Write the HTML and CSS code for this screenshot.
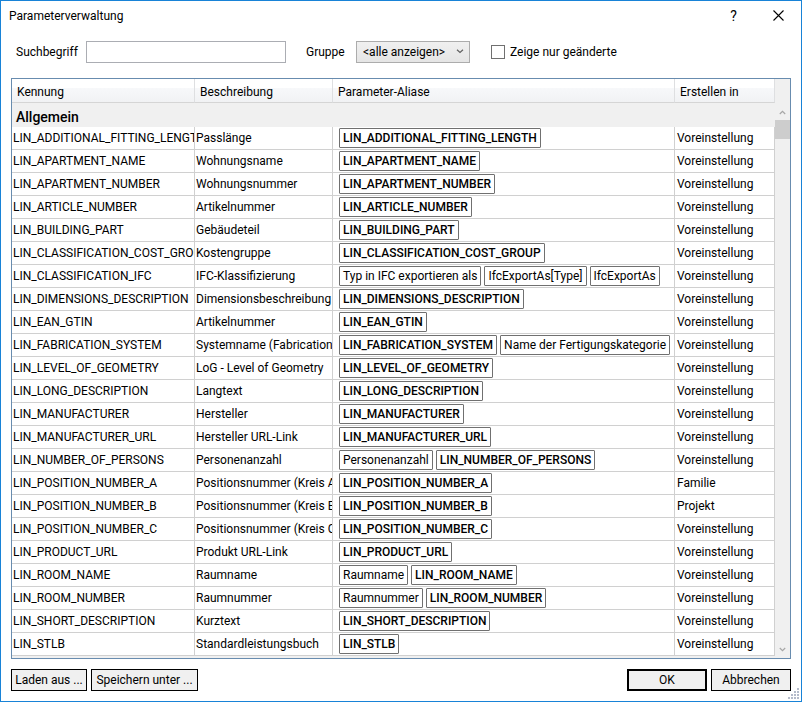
FILE: index.html
```
<!DOCTYPE html>
<html lang="de">
<head>
<meta charset="utf-8">
<title>Parameterverwaltung</title>
<link rel="stylesheet" href="styles.css">
</head>
<body>
<main class="window">
  <header class="titlebar">
    <h1 class="title">Parameterverwaltung</h1>
    <button class="caption-button help" type="button">?</button>
    <button class="caption-button" type="button" aria-label="Schließen"><svg width="11" height="11" viewBox="0 0 11 11"><path d="M.5 .5l10 10M10.5 .5l-10 10" stroke="#000" stroke-width="1.1" fill="none"/></svg></button>
  </header>

  <form class="filters">
    <label for="search">Suchbegriff</label>
    <input class="search" id="search" type="text">
    <label class="group-label" for="group">Gruppe</label>
    <span class="dropdown">
      <select id="group"><option>&lt;alle anzeigen&gt;</option></select>
      <svg class="chevron" width="8" height="5" viewBox="0 0 8 5"><path d="M1 .8l3 2.7 3-2.7" stroke="#606060" stroke-width="1.2" fill="none"/></svg>
    </span>
    <input class="check" id="changed" type="checkbox">
    <label class="check-label" for="changed">Zeige nur geänderte</label>
  </form>

  <section class="list">
    <table class="parameters">
      <colgroup><col class="col-id"><col class="col-text"><col><col class="col-created"></colgroup>
      <thead>
        <tr><th>Kennung</th><th>Beschreibung</th><th>Parameter-Aliase</th><th>Erstellen in</th></tr>
      </thead>
      <tbody>
        <tr class="group"><th colspan="4">Allgemein</th></tr>
        <tr><td>LIN_ADDITIONAL_FITTING_LENGTH</td><td>Passlänge</td><td><b>LIN_ADDITIONAL_FITTING_LENGTH</b></td><td>Voreinstellung</td></tr>
        <tr><td>LIN_APARTMENT_NAME</td><td>Wohnungsname</td><td><b>LIN_APARTMENT_NAME</b></td><td>Voreinstellung</td></tr>
        <tr><td>LIN_APARTMENT_NUMBER</td><td>Wohnungsnummer</td><td><b>LIN_APARTMENT_NUMBER</b></td><td>Voreinstellung</td></tr>
        <tr><td>LIN_ARTICLE_NUMBER</td><td>Artikelnummer</td><td><b>LIN_ARTICLE_NUMBER</b></td><td>Voreinstellung</td></tr>
        <tr><td>LIN_BUILDING_PART</td><td>Gebäudeteil</td><td><b>LIN_BUILDING_PART</b></td><td>Voreinstellung</td></tr>
        <tr><td>LIN_CLASSIFICATION_COST_GROUP</td><td>Kostengruppe</td><td><b>LIN_CLASSIFICATION_COST_GROUP</b></td><td>Voreinstellung</td></tr>
        <tr><td>LIN_CLASSIFICATION_IFC</td><td>IFC-Klassifizierung</td><td><span>Typ in IFC exportieren als</span><span>IfcExportAs[Type]</span><span>IfcExportAs</span></td><td>Voreinstellung</td></tr>
        <tr><td>LIN_DIMENSIONS_DESCRIPTION</td><td>Dimensionsbeschreibung</td><td><b>LIN_DIMENSIONS_DESCRIPTION</b></td><td>Voreinstellung</td></tr>
        <tr><td>LIN_EAN_GTIN</td><td>Artikelnummer</td><td><b>LIN_EAN_GTIN</b></td><td>Voreinstellung</td></tr>
        <tr><td>LIN_FABRICATION_SYSTEM</td><td>Systemname (Fabrication)</td><td><b>LIN_FABRICATION_SYSTEM</b><span>Name der Fertigungskategorie</span></td><td>Voreinstellung</td></tr>
        <tr><td>LIN_LEVEL_OF_GEOMETRY</td><td>LoG - Level of Geometry</td><td><b>LIN_LEVEL_OF_GEOMETRY</b></td><td>Voreinstellung</td></tr>
        <tr><td>LIN_LONG_DESCRIPTION</td><td>Langtext</td><td><b>LIN_LONG_DESCRIPTION</b></td><td>Voreinstellung</td></tr>
        <tr><td>LIN_MANUFACTURER</td><td>Hersteller</td><td><b>LIN_MANUFACTURER</b></td><td>Voreinstellung</td></tr>
        <tr><td>LIN_MANUFACTURER_URL</td><td>Hersteller URL-Link</td><td><b>LIN_MANUFACTURER_URL</b></td><td>Voreinstellung</td></tr>
        <tr><td>LIN_NUMBER_OF_PERSONS</td><td>Personenanzahl</td><td><span>Personenanzahl</span><b>LIN_NUMBER_OF_PERSONS</b></td><td>Voreinstellung</td></tr>
        <tr><td>LIN_POSITION_NUMBER_A</td><td>Positionsnummer (Kreis A)</td><td><b>LIN_POSITION_NUMBER_A</b></td><td>Familie</td></tr>
        <tr><td>LIN_POSITION_NUMBER_B</td><td>Positionsnummer (Kreis B)</td><td><b>LIN_POSITION_NUMBER_B</b></td><td>Projekt</td></tr>
        <tr><td>LIN_POSITION_NUMBER_C</td><td>Positionsnummer (Kreis C)</td><td><b>LIN_POSITION_NUMBER_C</b></td><td>Voreinstellung</td></tr>
        <tr><td>LIN_PRODUCT_URL</td><td>Produkt URL-Link</td><td><b>LIN_PRODUCT_URL</b></td><td>Voreinstellung</td></tr>
        <tr><td>LIN_ROOM_NAME</td><td>Raumname</td><td><span>Raumname</span><b>LIN_ROOM_NAME</b></td><td>Voreinstellung</td></tr>
        <tr><td>LIN_ROOM_NUMBER</td><td>Raumnummer</td><td><span>Raumnummer</span><b>LIN_ROOM_NUMBER</b></td><td>Voreinstellung</td></tr>
        <tr><td>LIN_SHORT_DESCRIPTION</td><td>Kurztext</td><td><b>LIN_SHORT_DESCRIPTION</b></td><td>Voreinstellung</td></tr>
        <tr><td>LIN_STLB</td><td>Standardleistungsbuch</td><td><b>LIN_STLB</b></td><td>Voreinstellung</td></tr>
      </tbody>
    </table>
    <div class="scrollbar">
      <svg width="7" height="5" viewBox="0 0 7 5"><path d="M.8 4l2.7-2.7L6.2 4" stroke="#a6a6a6" stroke-width="1.2" fill="none"/></svg>
      <div class="thumb"></div>
      <svg class="down" width="7" height="5" viewBox="0 0 7 5"><path d="M.8 1l2.7 2.7L6.2 1" stroke="#a6a6a6" stroke-width="1.2" fill="none"/></svg>
    </div>
  </section>

  <footer class="actions">
    <button class="load" type="button">Laden aus ...</button>
    <button class="save" type="button">Speichern unter ...</button>
    <button class="ok" type="button">OK</button>
    <button class="cancel" type="button">Abbrechen</button>
  </footer>
  <svg class="grip" width="11" height="11" viewBox="0 0 11 11" fill="#b5bccb"><path d="M9 0h2v2H9zM6 3h2v2H6zM9 3h2v2H9zM3 6h2v2H3zM6 6h2v2H6zM9 6h2v2H9zM0 9h2v2H0zM3 9h2v2H3zM6 9h2v2H6zM9 9h2v2H9z"/></svg>
</main>
</body>
</html>
```
FILE: styles.css
```
* { box-sizing: border-box; }

body {
  margin: 0;
  background: #fff;
  color: #000;
  font: 12px/16px "Segoe UI", Roboto, sans-serif;
}

button, input, select { font: inherit; color: inherit; margin: 0; }

.window {
  position: relative;
  min-height: 100vh;
  padding: 0 10px 10px;
  border: 1px solid #1883d7;
}

.titlebar {
  display: flex;
  align-items: center;
  height: 29px;
  margin: 0 -10px;
  padding-left: 8px;
}
.title { flex: 1; margin: 0; font-size: 12px; font-weight: 400; }
.caption-button {
  display: flex;
  align-items: center;
  justify-content: center;
  width: 45px;
  height: 29px;
  padding: 0;
  border: 0;
  background: none;
}
.help { font-size: 14px; }

.filters {
  display: flex;
  align-items: center;
  height: 22px;
  margin: 11px 0 15px;
  padding-left: 5px;
}
.filters label:first-child { width: 70px; }
.search {
  width: 200px;
  height: 22px;
  padding: 0 4px;
  border: 1px solid #abadb3;
}
.group-label { width: 50px; margin-left: 20px; }
.dropdown { position: relative; }
.dropdown select {
  display: block;
  width: 114px;
  height: 22px;
  padding: 0 6px;
  border: 1px solid #acacac;
  border-radius: 0;
  background: linear-gradient(#f0f0f0, #e5e5e5);
  appearance: none;
}
.chevron { position: absolute; top: 8px; right: 6px; pointer-events: none; }
.check {
  width: 14px;
  height: 14px;
  margin-left: 21px;
  border: 1px solid #707070;
  background: #fff;
  appearance: none;
}
.check:checked { background: #707070; }
.check-label { margin-left: 5px; }

.list {
  display: flex;
  padding-bottom: 2px;
  border: 1px solid #688caf;
  background: #f0f0f0;
}
.parameters {
  flex: 1;
  width: 0;
  table-layout: fixed;
  border-collapse: separate;
  border-spacing: 0;
}
.col-id { width: 183px; }
.col-text { width: 138px; }
.col-created { width: 100px; }

.parameters th { text-align: left; font-weight: 400; }
thead th {
  height: 24px;
  padding: 2px 5px 0;
  border-right: 1px solid #dedfe1;
  border-bottom: 1px solid #d5d5d5;
  background: linear-gradient(#fff 40%, #f7f8fa 40%, #f1f2f4);
}
.parameters .group th {
  height: 24px;
  padding: 4px 4px 0;
  background: #f0f0f0;
  font-size: 14px;
  font-weight: 500;
}
.parameters td {
  height: 23px;
  padding: 1px 0 1px 1px;
  overflow: hidden;
  border-right: 1px solid #d0d0d0;
  border-bottom: 1px solid #d0d0d0;
  background: #fff;
  white-space: nowrap;
}
.parameters td:nth-child(3) { padding: 0 6px; font-size: 0; }
.parameters td:nth-child(4) { padding-left: 2px; }
.parameters td b,
.parameters td span {
  display: inline-block;
  height: 20px;
  margin-right: 3px;
  padding: 1px 3px;
  border: 1px solid #707070;
  border-radius: 1px;
  font-size: 12px;
  vertical-align: middle;
}
.parameters td b { font-weight: 500; }

.scrollbar {
  display: flex;
  flex-direction: column;
  align-items: center;
  width: 15px;
  padding-top: 31px;
}
.thumb { width: 15px; height: 19px; margin-top: 5px; background: #cdcdcd; }
.down { margin-top: auto; margin-bottom: 4px; }

.actions { display: flex; gap: 4px; margin-top: 10px; }
.actions button {
  height: 22px;
  padding: 0;
  border: 1px solid #000;
  background: #f0f0f0;
}
.actions .load { width: 76px; }
.actions .save { width: 107px; }
.actions .ok { width: 80px; margin-left: auto; border-width: 2px; }
.actions .cancel { width: 80px; }

.grip { position: absolute; right: 2px; bottom: 2px; }
```
